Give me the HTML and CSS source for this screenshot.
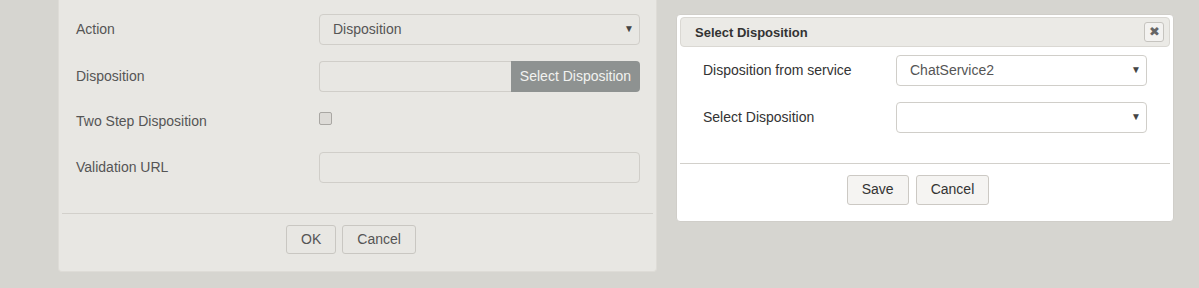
FILE: index.html
```html
<!DOCTYPE html>
<html lang="en">
  <head>
    <meta charset="UTF-8" />
    <meta name="viewport" content="width=device-width, initial-scale=1.0" />
    <title>Select Disposition</title>
    <link rel="stylesheet" href="styles.css">
  </head>
  <body>
    <!-- Action settings panel -->
    <div class="panel">
      <div class="panel-body">
        <div class="frow">
          <label class="flabel">Action</label>
          <span class="select-wrap select-muted">
            <select class="fselect">
              <option>Disposition</option>
            </select>
          </span>
        </div>
        <div class="frow">
          <label class="flabel">Disposition</label>
          <div class="input-group">
            <input type="text" class="finput">
            <button class="btn-addon">Select Disposition</button>
          </div>
        </div>
        <div class="frow frow-check">
          <label class="flabel">Two Step Disposition</label>
          <span class="fcheck"></span>
        </div>
        <div class="frow">
          <label class="flabel">Validation URL</label>
          <input type="text" class="finput">
        </div>
      </div>
      <hr class="divider">
      <div class="panel-footer">
        <button class="btn">OK</button>
        <button class="btn">Cancel</button>
      </div>
    </div>

    <!-- Select disposition dialog -->
    <div class="dialog">
      <div class="dialog-title">
        <span>Select Disposition</span>
        <button class="dialog-close">&#10006;</button>
      </div>
      <div class="dialog-body">
        <div class="drow">
          <label class="dlabel">Disposition from service</label>
          <span class="select-wrap">
            <select class="fselect">
              <option>ChatService2</option>
            </select>
          </span>
        </div>
        <div class="drow">
          <label class="dlabel">Select Disposition</label>
          <span class="select-wrap">
            <select class="fselect">
              <option></option>
            </select>
          </span>
        </div>
      </div>
      <hr class="divider">
      <div class="dialog-footer">
        <button class="btn btn-light btn-save">Save</button>
        <button class="btn btn-light">Cancel</button>
      </div>
    </div>
  </body>
</html>
```

FILE: styles.css
```css
/* Base */
body {
  margin: 0;
  background-color: #d6d5d0;
  display: flex;
  align-items: flex-start;
  font-family: "Liberation Sans", Arial, sans-serif;
  font-size: 14px;
  color: #555;
}

/* Left panel */
.panel {
  box-sizing: border-box;
  width: 599px;
  margin-left: 58px;
  background-color: #e8e7e3;
  border: 1px solid #dedcd7;
  border-top: none;
  border-radius: 0 0 4px 4px;
}

.panel-body {
  padding: 14px 16px 30px 17px;
}

.frow {
  display: grid;
  grid-template-columns: 243px 1fr;
  align-items: center;
  height: 31px;
  margin-bottom: 16px;
}

.frow:last-child {
  margin-bottom: 0;
}

.frow-check {
  height: 28px;
}

.flabel {
  color: #555;
  padding-bottom: 2px;
}

.select-wrap {
  position: relative;
  display: block;
}

.select-wrap::after {
  content: "\25BC";
  position: absolute;
  right: 6px;
  top: 9px;
  font-size: 10px;
  color: #444;
  pointer-events: none;
}

.fselect {
  -webkit-appearance: none;
  appearance: none;
  box-sizing: border-box;
  width: 100%;
  height: 31px;
  padding: 0 13px 2px;
  font-family: inherit;
  font-size: 14px;
  color: #555;
  background-color: #fff;
  border: 1px solid #d0cec9;
  border-radius: 4px;
  outline: none;
}

.select-muted .fselect {
  background-color: #e8e7e3;
}

.finput {
  box-sizing: border-box;
  width: 100%;
  height: 31px;
  padding: 0 12px;
  background-color: #e8e7e3;
  border: 1px solid #d0cec9;
  border-radius: 4px;
  outline: none;
}

.input-group {
  display: flex;
}

.input-group .finput {
  border-radius: 4px 0 0 4px;
  border-right: none;
}

.btn-addon {
  flex: none;
  width: 129px;
  height: 31px;
  padding: 0 0 2px;
  font-family: inherit;
  font-size: 14px;
  color: #f2f2f0;
  background-color: #8e9291;
  border: none;
  border-radius: 0 4px 4px 0;
}

.fcheck {
  align-self: start;
  margin-top: 4px;
  width: 11px;
  height: 11px;
  border: 1px solid #a9a7a3;
  border-radius: 2px;
  background-color: #dddbd7;
}

.divider {
  margin: 0 3px;
  border: none;
  border-top: 1px solid #d2d0cb;
}

.panel-footer {
  display: flex;
  justify-content: center;
  gap: 6px;
  padding: 11px 13px 17px 0;
}

.btn {
  height: 29px;
  padding: 0 14px 2px;
  font-family: inherit;
  font-size: 14px;
  color: #555;
  background-color: #e8e7e3;
  border: 1px solid #c9c7c2;
  border-radius: 3px;
}

/* Dialog */
.dialog {
  box-sizing: border-box;
  width: 498px;
  margin: 14px 0 0 19px;
  padding: 2px 3px;
  background-color: #fff;
  border: 1px solid #d0cec9;
  border-radius: 4px;
}

.dialog-title {
  box-sizing: border-box;
  height: 30px;
  display: flex;
  align-items: center;
  justify-content: space-between;
  padding: 0 5px 0 14px;
  background-color: #ebeae6;
  border: 1px solid #dad8d3;
  border-radius: 4px;
  font-size: 13px;
  font-weight: bold;
  color: #333;
}

.dialog-close {
  box-sizing: border-box;
  width: 20px;
  height: 20px;
  padding: 0;
  font-size: 13px;
  line-height: 18px;
  color: #666;
  background-color: #f3f2f0;
  border: 1px solid #c6c4bf;
  border-radius: 3px;
}

.dialog-body {
  padding: 8px 23px 30px 23px;
}

.drow {
  display: grid;
  grid-template-columns: 193px 1fr;
  align-items: center;
  height: 31px;
  margin-bottom: 16px;
}

.drow:last-child {
  margin-bottom: 0;
}

.dlabel {
  color: #333;
  padding-bottom: 2px;
}

.dialog .divider {
  margin: 0;
}

.dialog-footer {
  display: flex;
  justify-content: center;
  gap: 7px;
  padding: 11px 14px 14px 0;
}

.btn-light {
  height: 30px;
  color: #333;
  background-color: #f5f4f2;
  border-color: #ccc9c4;
}

.btn-save {
  padding: 0 14px 2px;
}
```
